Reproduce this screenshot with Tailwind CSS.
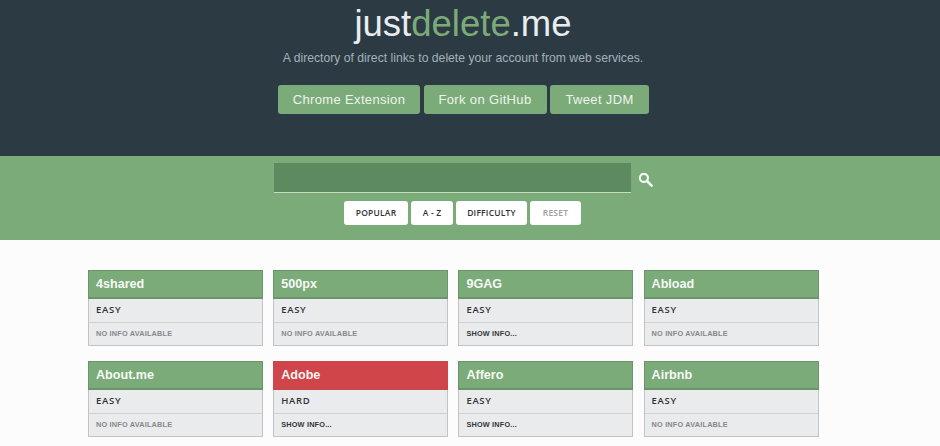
<!DOCTYPE html>
<html>
<head>
<meta charset="utf-8">
<script src="https://cdn.jsdelivr.net/npm/@tailwindcss/browser@4"></script>
</head>
<body class="w-[940px] h-[446px] overflow-hidden bg-[#fcfcfc] font-['Liberation_Sans',Arial,sans-serif]">
<header class="h-[156px] bg-[#2c3a43] flex flex-col items-center pr-[14px]">
  <h1 class="mt-[1px] text-[36.5px] leading-[45px] text-[#e8edf0] font-normal">just<span class="text-[#7bab79]">delete</span>.me</h1>
  <p class="mt-[4px] text-[12.2px] leading-[16px] text-[#a4b1b9]">A directory of direct links to delete your account from web services.</p>
  <div class="mt-[19px] ml-[1px] flex gap-[3.5px] text-[13px] tracking-[0.35px] text-[#eef3ee]">
    <a class="h-[29px] w-[142px] rounded-[3px] bg-[#7bab79] flex items-center justify-center">Chrome Extension</a>
    <a class="h-[29px] w-[123px] rounded-[3px] bg-[#7bab79] flex items-center justify-center">Fork on GitHub</a>
    <a class="h-[29px] w-[99px] rounded-[3px] bg-[#7bab79] flex items-center justify-center">Tweet JDM</a>
  </div>
</header>
<section class="h-[84px] bg-[#7bab79] flex flex-col items-center pr-[14px]">
  <div class="mt-[7px] ml-[0.5px] flex items-center">
    <div class="w-[357px] h-[29px] bg-[#5d8a5e] border-b border-[#c3dcc2] box-content"></div>
    <svg class="ml-[7px] mt-[2px]" width="15" height="15" viewBox="0 0 16 16" fill="none" stroke="#f4f8f4"><circle cx="6.3" cy="6.3" r="4.3" stroke-width="2.3"/><path d="M9.6 9.6 14.5 14.5" stroke-width="2.8" stroke-linecap="round"/></svg>
  </div>
  <div class="mt-[8px] ml-[-1px] flex gap-[3px] text-[8.5px] tracking-[0.2px] font-['Open_Sans',sans-serif] font-semibold text-[#2f3336]">
    <button class="w-[64px] h-[24px] bg-white rounded-[3px]">POPULAR</button>
    <button class="w-[42px] h-[24px] bg-white rounded-[3px]">A - Z</button>
    <button class="w-[71px] h-[24px] bg-white rounded-[3px]">DIFFICULTY</button>
    <button class="w-[51px] h-[24px] bg-white rounded-[3px] text-[#9aa09a]">RESET</button>
  </div>
</section>
<main class="pt-[30px] pl-[88px] grid grid-cols-[repeat(4,175px)] gap-x-[10.2px] gap-y-[15px] text-[10px]">
  <article class="h-[76px] border border-[#c0c4c6] bg-[#e9ebed] flex flex-col">
    <div class="h-[29px] -mx-px -mt-px shrink-0 bg-[#7bab79] border border-b-2 border-[#6b946a] pl-[7px] flex items-center text-[12.6px] font-bold text-[#f6f9f6]">4shared</div>
    <div class="h-[24px] shrink-0 border-b border-[#cfd2d4] pl-[7px] flex items-center text-[9.5px] tracking-[0.7px] font-['Open_Sans',sans-serif] font-semibold text-[#2f3336]">EASY</div>
    <div class="grow pl-[7px] flex items-center text-[7.3px] font-bold tracking-[0.2px] text-[#85898c]">NO INFO AVAILABLE</div>
  </article>
  <article class="h-[76px] border border-[#c0c4c6] bg-[#e9ebed] flex flex-col">
    <div class="h-[29px] -mx-px -mt-px shrink-0 bg-[#7bab79] border border-b-2 border-[#6b946a] pl-[7px] flex items-center text-[12.6px] font-bold text-[#f6f9f6]">500px</div>
    <div class="h-[24px] shrink-0 border-b border-[#cfd2d4] pl-[7px] flex items-center text-[9.5px] tracking-[0.7px] font-['Open_Sans',sans-serif] font-semibold text-[#2f3336]">EASY</div>
    <div class="grow pl-[7px] flex items-center text-[7.3px] font-bold tracking-[0.2px] text-[#85898c]">NO INFO AVAILABLE</div>
  </article>
  <article class="h-[76px] border border-[#c0c4c6] bg-[#e9ebed] flex flex-col">
    <div class="h-[29px] -mx-px -mt-px shrink-0 bg-[#7bab79] border border-b-2 border-[#6b946a] pl-[7px] flex items-center text-[12.6px] font-bold text-[#f6f9f6]">9GAG</div>
    <div class="h-[24px] shrink-0 border-b border-[#cfd2d4] pl-[7px] flex items-center text-[9.5px] tracking-[0.7px] font-['Open_Sans',sans-serif] font-semibold text-[#2f3336]">EASY</div>
    <div class="grow pl-[7px] flex items-center text-[7.3px] font-bold tracking-[0.2px] text-[#33383b]">SHOW INFO...</div>
  </article>
  <article class="h-[76px] border border-[#c0c4c6] bg-[#e9ebed] flex flex-col">
    <div class="h-[29px] -mx-px -mt-px shrink-0 bg-[#7bab79] border border-b-2 border-[#6b946a] pl-[7px] flex items-center text-[12.6px] font-bold text-[#f6f9f6]">Abload</div>
    <div class="h-[24px] shrink-0 border-b border-[#cfd2d4] pl-[7px] flex items-center text-[9.5px] tracking-[0.7px] font-['Open_Sans',sans-serif] font-semibold text-[#2f3336]">EASY</div>
    <div class="grow pl-[7px] flex items-center text-[7.3px] font-bold tracking-[0.2px] text-[#85898c]">NO INFO AVAILABLE</div>
  </article>
  <article class="h-[76px] border border-[#c0c4c6] bg-[#e9ebed] flex flex-col">
    <div class="h-[29px] -mx-px -mt-px shrink-0 bg-[#7bab79] border border-b-2 border-[#6b946a] pl-[7px] flex items-center text-[12.6px] font-bold text-[#f6f9f6]">About.me</div>
    <div class="h-[24px] shrink-0 border-b border-[#cfd2d4] pl-[7px] flex items-center text-[9.5px] tracking-[0.7px] font-['Open_Sans',sans-serif] font-semibold text-[#2f3336]">EASY</div>
    <div class="grow pl-[7px] flex items-center text-[7.3px] font-bold tracking-[0.2px] text-[#85898c]">NO INFO AVAILABLE</div>
  </article>
  <article class="h-[76px] border border-[#c0c4c6] bg-[#e9ebed] flex flex-col">
    <div class="h-[29px] -mx-px -mt-px shrink-0 bg-[#cf4549] border border-b-2 border-[#c9474a] pl-[7px] flex items-center text-[12.6px] font-bold text-[#f9f3f3]">Adobe</div>
    <div class="h-[24px] shrink-0 border-b border-[#cfd2d4] pl-[7px] flex items-center text-[9.5px] tracking-[0.7px] font-['Open_Sans',sans-serif] font-semibold text-[#2f3336]">HARD</div>
    <div class="grow pl-[7px] flex items-center text-[7.3px] font-bold tracking-[0.2px] text-[#33383b]">SHOW INFO...</div>
  </article>
  <article class="h-[76px] border border-[#c0c4c6] bg-[#e9ebed] flex flex-col">
    <div class="h-[29px] -mx-px -mt-px shrink-0 bg-[#7bab79] border border-b-2 border-[#6b946a] pl-[7px] flex items-center text-[12.6px] font-bold text-[#f6f9f6]">Affero</div>
    <div class="h-[24px] shrink-0 border-b border-[#cfd2d4] pl-[7px] flex items-center text-[9.5px] tracking-[0.7px] font-['Open_Sans',sans-serif] font-semibold text-[#2f3336]">EASY</div>
    <div class="grow pl-[7px] flex items-center text-[7.3px] font-bold tracking-[0.2px] text-[#33383b]">SHOW INFO...</div>
  </article>
  <article class="h-[76px] border border-[#c0c4c6] bg-[#e9ebed] flex flex-col">
    <div class="h-[29px] -mx-px -mt-px shrink-0 bg-[#7bab79] border border-b-2 border-[#6b946a] pl-[7px] flex items-center text-[12.6px] font-bold text-[#f6f9f6]">Airbnb</div>
    <div class="h-[24px] shrink-0 border-b border-[#cfd2d4] pl-[7px] flex items-center text-[9.5px] tracking-[0.7px] font-['Open_Sans',sans-serif] font-semibold text-[#2f3336]">EASY</div>
    <div class="grow pl-[7px] flex items-center text-[7.3px] font-bold tracking-[0.2px] text-[#85898c]">NO INFO AVAILABLE</div>
  </article>
</main>
</body>
</html>
